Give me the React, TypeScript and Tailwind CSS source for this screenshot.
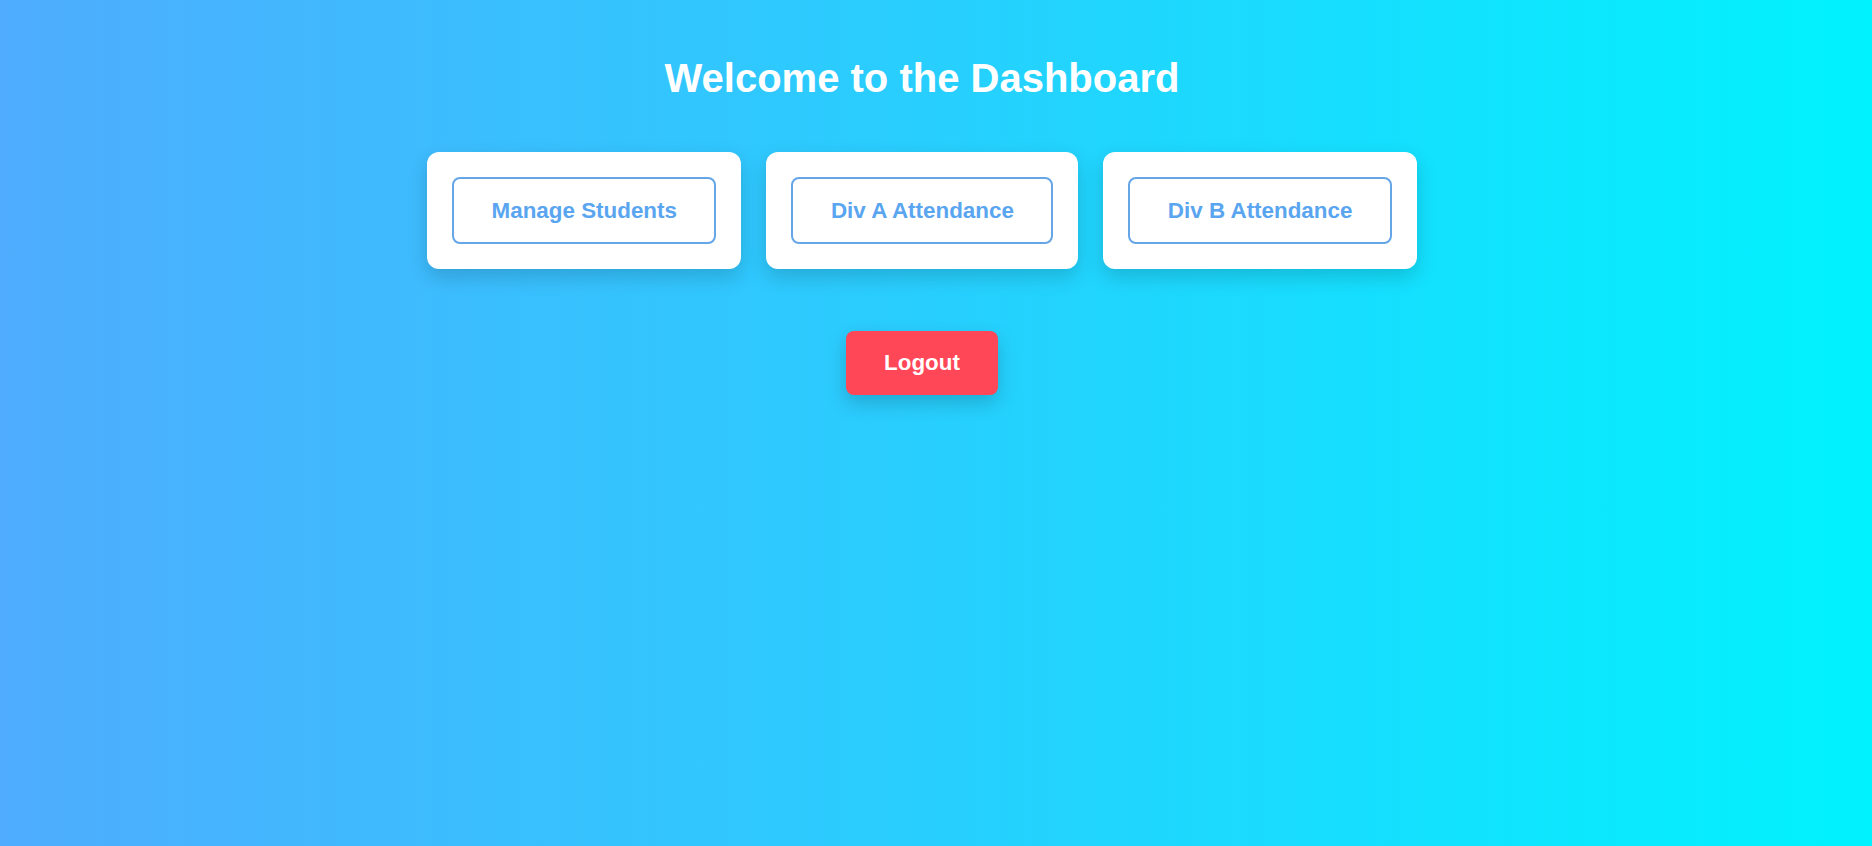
const cards = ['Manage Students', 'Div A Attendance', 'Div B Attendance']

export default function App() {
  return (
    <div className="min-h-screen w-full bg-[linear-gradient(to_right,#4facfe,#00f2fe)] font-['Liberation_Sans',Arial,sans-serif]">
      <div className="flex flex-col items-center pt-[55px] pr-[28px]">
        <h1 className="text-[40px] font-bold text-white leading-[46px]">
          Welcome to the Dashboard
        </h1>

        <div className="flex gap-[25px] mt-[51px]">
          {cards.map((label) => (
            <div
              key={label}
              className="bg-white rounded-xl p-[25px] shadow-[0_8px_20px_rgba(0,0,0,0.16)]"
            >
              <button className="border-2 border-[#66a6e6] rounded-lg py-[18.5px] px-[37.5px] text-[22.4px] leading-[26px] font-bold text-[#5aa5f0] bg-white">
                {label}
              </button>
            </div>
          ))}
        </div>

        <button className="mt-[62px] bg-[#ff4757] text-white font-bold text-[22.4px] leading-[26px] py-[19px] px-[38px] rounded-lg shadow-[0_8px_20px_rgba(0,0,0,0.18)]">
          Logout
        </button>
      </div>
    </div>
  )
}
